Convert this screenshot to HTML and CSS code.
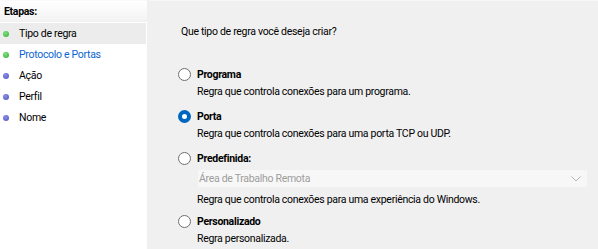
FILE: index.html
```html
<!DOCTYPE html>
<html lang="pt-BR">
<head>
    <meta charset="UTF-8">
    <title>Novo Assistente de Regra de Entrada</title>
    <link rel="stylesheet" href="styles.css">
</head>
<body>
    <aside class="steps">
        <div class="steps-header">Etapas:</div>
        <ul class="step-list">
            <li class="step done current"><span class="dot"></span>Tipo de regra</li>
            <li class="step done link"><span class="dot"></span>Protocolo e Portas</li>
            <li class="step"><span class="dot"></span>Ação</li>
            <li class="step"><span class="dot"></span>Perfil</li>
            <li class="step"><span class="dot"></span>Nome</li>
        </ul>
    </aside>

    <main class="page">
        <p class="question">Que tipo de regra você deseja criar?</p>

        <div class="options">
            <div class="option">
                <div class="option-title"><span class="radio"></span>Programa</div>
                <div class="option-desc">Regra que controla conexões para um programa.</div>
            </div>
            <div class="option">
                <div class="option-title"><span class="radio checked"></span>Porta</div>
                <div class="option-desc">Regra que controla conexões para uma porta TCP ou UDP.</div>
            </div>
            <div class="option">
                <div class="option-title"><span class="radio"></span>Predefinida:</div>
                <div class="select">
                    <span>Área de Trabalho Remota</span>
                    <svg class="chevron" width="10" height="6" viewBox="0 0 10 6">
                        <path d="M0.5 0.5 L5 5 L9.5 0.5" fill="none" stroke="#b4b4b4" stroke-width="1"/>
                    </svg>
                </div>
                <div class="option-desc">Regra que controla conexões para uma experiência do Windows.</div>
            </div>
            <div class="option">
                <div class="option-title"><span class="radio"></span>Personalizado</div>
                <div class="option-desc">Regra personalizada.</div>
            </div>
        </div>
    </main>
</body>
</html>
```

FILE: styles.css
```css
* {
    margin: 0;
    padding: 0;
    box-sizing: border-box;
}

body {
    font-family: 'Roboto', 'Liberation Sans', sans-serif;
    font-size: 10.5px;
    letter-spacing: -0.3px;
    color: #000;
    background: #f0f0f0;
    height: 249px;
    display: flex;
    gap: 2px;
    overflow: hidden;
}

/* left column with wizard steps */
.steps {
    width: 147px;
    background: #fff;
    flex-shrink: 0;
}

.steps-header {
    height: 22px;
    padding: 4px 4px 0;
    font-weight: bold;
    background: linear-gradient(#ffffff, #f3f3f3);
    border-top: 1px solid #fafafa;
    border-bottom: 1px solid #f0f0f0;
}

.step-list {
    list-style: none;
    padding-top: 1px;
}

.step {
    height: 21px;
    display: flex;
    align-items: center;
    padding-left: 3px;
    margin-right: 1px;
}

.step.current {
    background: #ececec;
}

.step.link {
    color: #0a64d2;
}

.dot {
    width: 6px;
    height: 6px;
    border-radius: 50%;
    margin-right: 10px;
    background: radial-gradient(circle at 40% 35%, #8b8ee6, #4f51c0);
}

.step.done .dot {
    background: radial-gradient(circle at 40% 35%, #7fe07f, #2fae2f);
}

/* right side */
.page {
    flex: 1;
    padding: 24px 10px 0 29px;
    border-top: 1px solid #f7f7f7;
}

.question {
    padding-left: 3px;
    height: 42px;
}

.options {
    display: flex;
    flex-direction: column;
    gap: 7px;
}

.option-title {
    display: flex;
    align-items: center;
    font-weight: bold;
    height: 15px;
}

.radio {
    width: 13px;
    height: 13px;
    border-radius: 50%;
    border: 1px solid #6f6f6f;
    background: #fff;
    margin-right: 6px;
}

.radio.checked {
    border: 4px solid #0067c0;
}

.option-desc {
    padding-left: 19px;
    height: 20px;
    line-height: 20px;
}

.select {
    margin: 3px 0 0 19px;
    height: 19px;
    background: #f7f7f7;
    border: 1px solid #f0f0f0;
    color: #9d9d9d;
    display: flex;
    align-items: center;
    justify-content: space-between;
    padding: 0 6px 0 1px;
}

.select + .option-desc {
    margin-top: 2px;
    height: 17px;
}
```
